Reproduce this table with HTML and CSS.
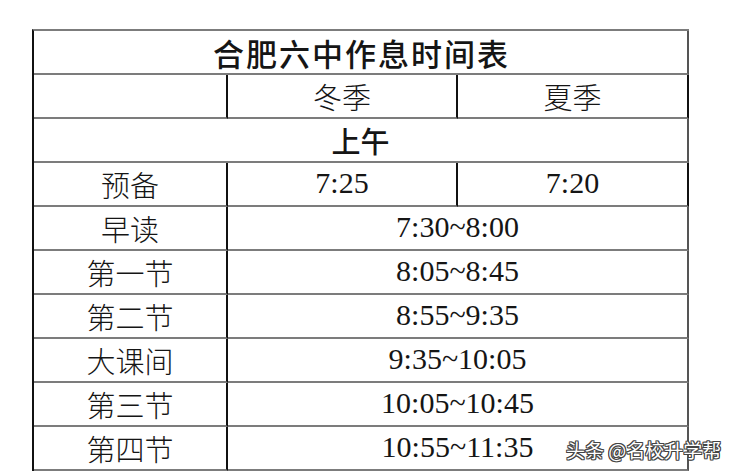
FILE: index.html
```html
<!DOCTYPE html>
<html lang="zh-CN">
<head>
<meta charset="utf-8">
<title>合肥六中作息时间表</title>
<link rel="stylesheet" href="styles.css">
</head>
<body>
<div class="page">
  <div class="schedule">
    <div class="cell span3 title">合肥六中作息时间表</div>
    <div class="cell"></div>
    <div class="cell label">冬季</div>
    <div class="cell label">夏季</div>
    <div class="cell span3 section">上午</div>
    <div class="cell label">预备</div>
    <div class="cell num">7:25</div>
    <div class="cell num">7:20</div>
    <div class="cell label">早读</div>
    <div class="cell span2 num">7:30~8:00</div>
    <div class="cell label">第一节</div>
    <div class="cell span2 num">8:05~8:45</div>
    <div class="cell label">第二节</div>
    <div class="cell span2 num">8:55~9:35</div>
    <div class="cell label">大课间</div>
    <div class="cell span2 num">9:35~10:05</div>
    <div class="cell label">第三节</div>
    <div class="cell span2 num">10:05~10:45</div>
    <div class="cell label">第四节</div>
    <div class="cell span2 num">10:55~11:35</div>
  </div>
  <div class="watermark">头条 @名校升学帮</div>
</div>
</body>
</html>
```
FILE: styles.css
```css
html, body {
  margin: 0;
  padding: 0;
  background: #ffffff;
}

.page {
  position: relative;
  width: 734px;
  height: 473px;
  overflow: hidden;
  padding: 29px 0 0 32px;
  box-sizing: border-box;
}

.schedule {
  display: grid;
  grid-template-columns: 194px 230px 231px;
  grid-auto-rows: 44px;
  width: 657px;
  box-sizing: border-box;
  border-top: 2px solid #7c7c7c;
  border-left: 2px solid #111111;
}

.cell {
  box-sizing: border-box;
  border-right: 2px solid #111111;
  border-bottom: 2px solid #7c7c7c;
  display: flex;
  align-items: center;
  justify-content: center;
  color: #151515;
  white-space: nowrap;
}

.span3 {
  grid-column: span 3;
  border-right-color: #555555;
}

.span2 {
  grid-column: span 2;
  border-right-color: #555555;
}

.title {
  font-family: "Noto Sans CJK SC", sans-serif;
  font-size: 31px;
  font-weight: 500;
  letter-spacing: 2px;
  padding-left: 2px;
}

.section {
  font-family: "Noto Sans CJK SC", sans-serif;
  font-size: 29px;
  font-weight: 500;
}

.label {
  font-family: "Noto Sans CJK SC", sans-serif;
  font-size: 29px;
  font-weight: 300;
}

.num {
  font-family: "Liberation Serif", "Times New Roman", serif;
  font-size: 30px;
  padding-bottom: 2px;
}

.watermark {
  position: absolute;
  left: 566px;
  top: 436px;
  font-family: "Noto Sans CJK SC", sans-serif;
  font-size: 19px;
  color: #ffffff;
  text-shadow:
    -1px 0 0 #444, 1px 0 0 #444, 0 -1px 0 #444, 0 1px 0 #444,
    -1px -1px 0 #444, 1px 1px 0 #444, -1px 1px 0 #444, 1px -1px 0 #444;
  white-space: nowrap;
}
```
